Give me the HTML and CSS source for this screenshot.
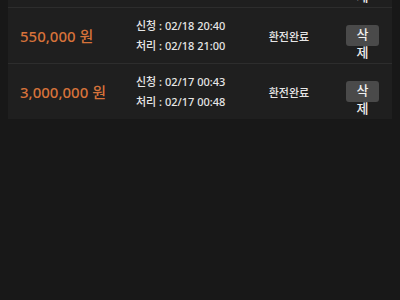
FILE: index.html
```html
<!DOCTYPE html>
<html lang="ko">

<head>
    <meta charset="UTF-8">
    <meta name="viewport" content="width=device-width, initial-scale=1.0">
    <title>환전 내역</title>
    <link rel="stylesheet" href="styles.css">
</head>

<body>
    <div class="history">
        <div class="history-row">
            <div class="amount">1,000,000 원</div>
            <div class="dates">
                <p>신청 : 02/19 11:02</p>
                <p>처리 : 02/19 11:10</p>
            </div>
            <div class="status">환전완료</div>
            <div class="action"><span class="btn-delete">삭제</span></div>
        </div>

        <div class="history-row">
            <div class="amount">550,000 원</div>
            <div class="dates">
                <p>신청 : 02/18 20:40</p>
                <p>처리 : 02/18 21:00</p>
            </div>
            <div class="status">환전완료</div>
            <div class="action"><span class="btn-delete">삭제</span></div>
        </div>

        <div class="history-row">
            <div class="amount">3,000,000 원</div>
            <div class="dates">
                <p>신청 : 02/17 00:43</p>
                <p>처리 : 02/17 00:48</p>
            </div>
            <div class="status">환전완료</div>
            <div class="action"><span class="btn-delete">삭제</span></div>
        </div>
    </div>
</body>

</html>
```

FILE: styles.css
```css
:root {
    --page-bg: #181818;
    --panel-bg: #1f1f1f;
    --line: #2d2d2d;
    --orange: #d6723a;
    --text: #e6e6e6;
}

* {
    box-sizing: border-box;
    margin: 0;
    padding: 0;
}

body {
    font-family: 'Noto Sans', 'Noto Sans CJK KR', sans-serif;
    background: var(--page-bg);
    color: var(--text);
    min-height: 100vh;
}

.history {
    margin: -48px 8px 0;
    background: var(--panel-bg);
}

.history-row {
    display: flex;
    align-items: center;
    height: 56px;
    padding-left: 12px;
    border-bottom: 1px solid var(--line);
}

.history-row:last-child {
    border-bottom: none;
    height: 55px;
}

.amount {
    width: 116px;
    color: var(--orange);
    font-size: 15px;
    font-weight: 500;
}

.dates {
    width: 109px;
    font-size: 11px;
    font-weight: 500;
    line-height: 20px;
    white-space: nowrap;
}

.status {
    flex: 1;
    text-align: center;
    font-size: 11px;
    font-weight: 500;
}

.action {
    width: 59px;
    height: 21px;
    display: flex;
    justify-content: center;
}

/* 버튼 폭이 좁아서 글자가 아래로 넘침 */
.btn-delete {
    display: block;
    width: 33px;
    height: 21px;
    padding: 0 9px;
    background: #4a4a4a;
    border-radius: 3px;
    text-align: center;
    font-size: 13px;
    font-weight: 500;
    line-height: 18px;
    word-break: break-all;
    color: #f0f0f0;
}
```
